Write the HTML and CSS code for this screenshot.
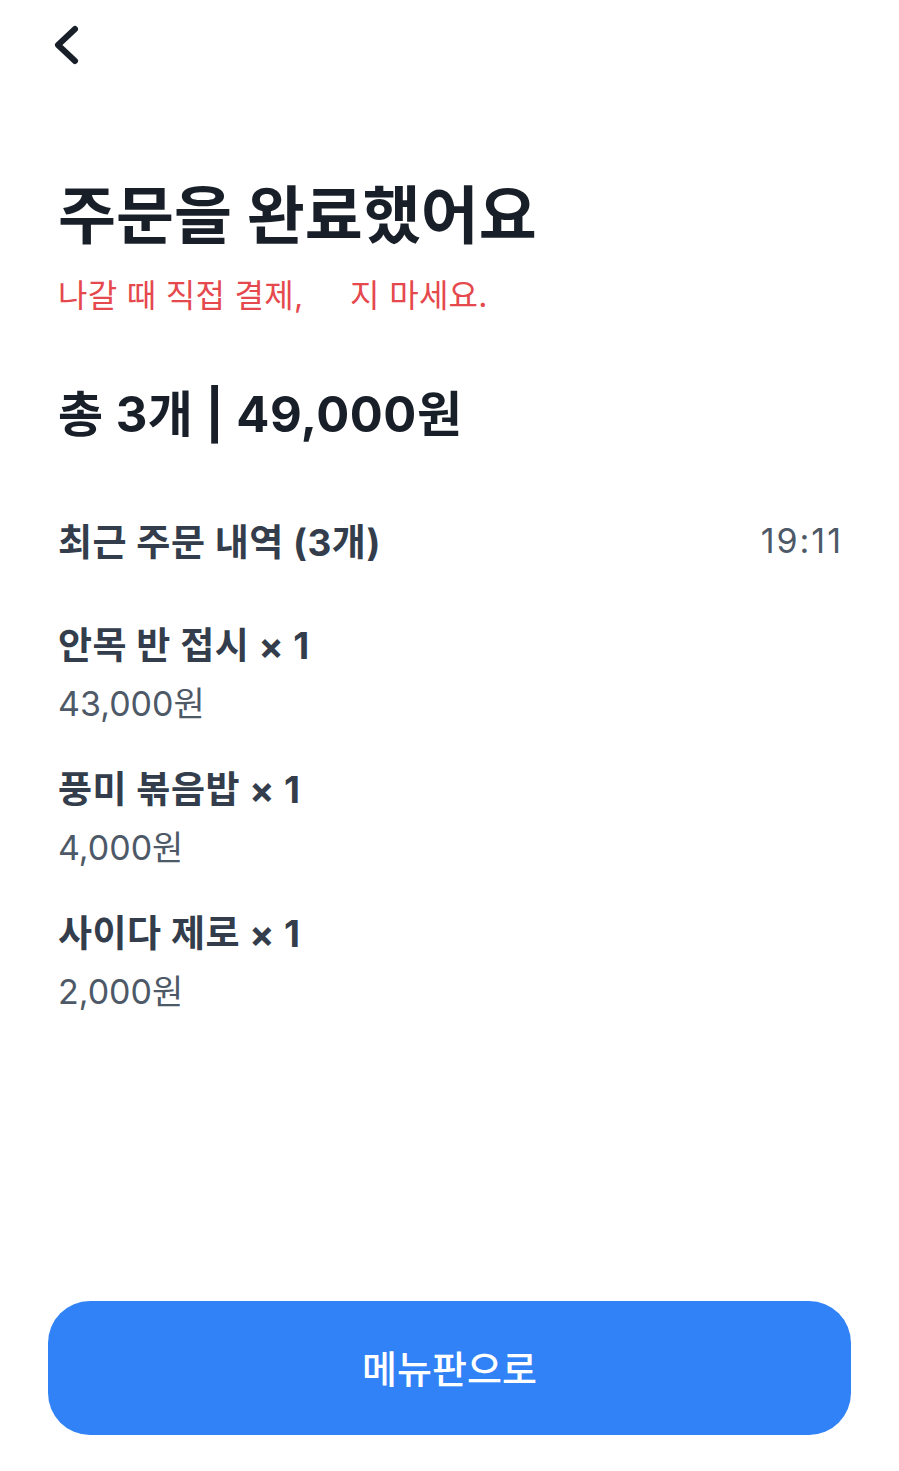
FILE: index.html
```html
<!DOCTYPE html>
<html lang="ko">
<head>
<meta charset="utf-8">
<title>주문 완료</title>
<link rel="stylesheet" href="styles.css">
</head>
<body>
<div class="page">
  <header class="topbar">
    <button class="back" aria-label="뒤로">
      <svg width="40" height="44" viewBox="0 0 40 44"><path d="M27 5 L10 21 L27 37" fill="none" stroke="#191f28" stroke-width="6" stroke-linecap="round" stroke-linejoin="round"/></svg>
    </button>
  </header>
  <main class="content">
    <h1 class="title">주문을 완료했어요</h1>
    <p class="notice">나갈 때 직접 결제,&nbsp;&nbsp;&nbsp;&nbsp;&nbsp;지 마세요.</p>
    <h2 class="total">총 3개 | 49,000원</h2>
    <div class="recent-head">
      <span class="recent-title">최근 주문 내역 (3개)</span>
      <span class="recent-time">19:11</span>
    </div>
    <ul class="items">
      <li class="item"><div class="item-name">안목 반 접시 × 1</div><div class="item-price">43,000원</div></li>
      <li class="item"><div class="item-name">풍미 볶음밥 × 1</div><div class="item-price">4,000원</div></li>
      <li class="item"><div class="item-name">사이다 제로 × 1</div><div class="item-price">2,000원</div></li>
    </ul>
  </main>
  <footer class="bottom">
    <button class="cta">메뉴판으로</button>
  </footer>
</div>
</body>
</html>
```
FILE: styles.css
```css
* { box-sizing: border-box; }
html, body { margin: 0; padding: 0; background: #fff; }
body { font-family: Inter, "Noto Sans CJK KR", "Noto Sans", sans-serif; color: #191f28; }
.page { height: 100vh; display: flex; flex-direction: column; }
.topbar { height: 90px; padding: 24px 0 0 48px; }
.back { border: 0; background: none; padding: 0; margin: 0; display: block; cursor: pointer; }
.back svg { display: block; }
.content { padding: 0 58px; flex: 1; }
.title { margin: 85px 0 0; font-size: 63px; line-height: 80px; font-weight: 700; letter-spacing: 0; color: #191f28; }
.notice { margin: 19px 0 0; font-size: 32px; line-height: 44px; color: #e5484d; font-weight: 400; letter-spacing: 0.3px; }
.total { margin: 65px 0 0; font-size: 49px; line-height: 64px; font-weight: 700; color: #191f28; letter-spacing: 0.5px; }
.recent-head { margin-top: 68px; display: flex; justify-content: space-between; align-items: center; height: 50px; }
.recent-title { font-size: 37px; font-weight: 700; color: #333d4b; letter-spacing: 0.5px; }
.recent-time { font-size: 34px; font-weight: 400; color: #4e5968; letter-spacing: 2px; margin-right: -2px; }
.items { list-style: none; margin: 56px 0 0; padding: 0; display: flex; flex-direction: column; gap: 37px; }
.item-name { font-size: 37px; line-height: 50px; font-weight: 700; color: #333d4b; letter-spacing: 0.5px; }
.item-price { margin-top: 9px; font-size: 34px; line-height: 48px; color: #4e5968; letter-spacing: 0; }
.bottom { padding: 0 48px 36px; }
.cta { width: 100%; height: 134px; border: 0; border-radius: 42px; background: #3182f6; color: #fff; font-family: inherit; font-size: 38px; font-weight: 500; cursor: pointer; padding-bottom: 4px; }
```
